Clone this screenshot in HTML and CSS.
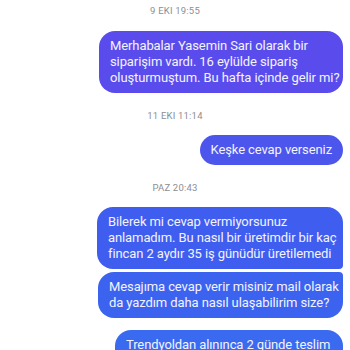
FILE: index.html
```html
<!DOCTYPE html>
<html lang="tr">
<head>
  <meta charset="UTF-8" />
  <meta name="viewport" content="width=device-width, initial-scale=1.0" />
  <title>Mesajlar</title>
  <link rel="stylesheet" href="styles.css">
</head>
<body>
  <div class="chat">
    <div class="time first">9 EKI 19:55</div>
    <div class="row">
      <div class="bubble c1">Merhabalar Yasemin Sari olarak bir<br>siparişim vardı. 16 eylülde sipariş<br>oluşturmuştum. Bu hafta içinde gelir mi?</div>
    </div>

    <div class="time">11 EKI 11:14</div>
    <div class="row">
      <div class="bubble c2">Keşke cevap verseniz</div>
    </div>

    <div class="time">PAZ 20:43</div>
    <div class="row">
      <div class="bubble c3 group-top">Bilerek mi cevap vermiyorsunuz<br>anlamadım. Bu nasıl bir üretimdir bir kaç<br>fincan 2 aydır 35 iş günüdür üretilemedi</div>
    </div>
    <div class="row tight">
      <div class="bubble c4 group-bottom">Mesajıma cevap verir misiniz mail olarak<br>da yazdım daha nasıl ulaşabilirim size?</div>
    </div>
    <div class="row spaced">
      <div class="bubble c5">Trendyoldan alınınca 2 günde teslim<br>ediliyor bu sipariş neden gecikti?</div>
    </div>
  </div>
</body>
</html>
```

FILE: styles.css
```css
body {
  margin: 0;
  background: #ffffff;
  font-family: Roboto, "Noto Sans", sans-serif;
}
.time {
  text-align: center;
  font-size: 9.5px;
  line-height: 12px;
  color: #8e8e93;
  letter-spacing: 0.2px;
  margin: 17px 0 13px;
}
.time.first {
  margin-top: 5px;
  margin-bottom: 14px;
}
.row {
  display: flex;
  justify-content: flex-end;
  padding-right: 7px;
}
.row.tight {
  margin-top: 3px;
}
.row.spaced {
  margin-top: 12px;
}
.bubble {
  color: #f3f3ff;
  font-size: 13px;
  line-height: 16px;
  letter-spacing: -0.1px;
  white-space: nowrap;
  padding: 7px 11px;
  border-radius: 16px;
}
.c1 { background: #5a4cec; width: 222px; }
.c2 { background: #4c55ec; }
.c3 { background: #3f5def; width: 224px; }
.c4 { background: #3b63ef; width: 223px; }
.c5 { background: #3a6af0; width: 206px; }
.group-top {
  border-bottom-right-radius: 4px;
}
.group-bottom {
  border-top-right-radius: 4px;
}
```
